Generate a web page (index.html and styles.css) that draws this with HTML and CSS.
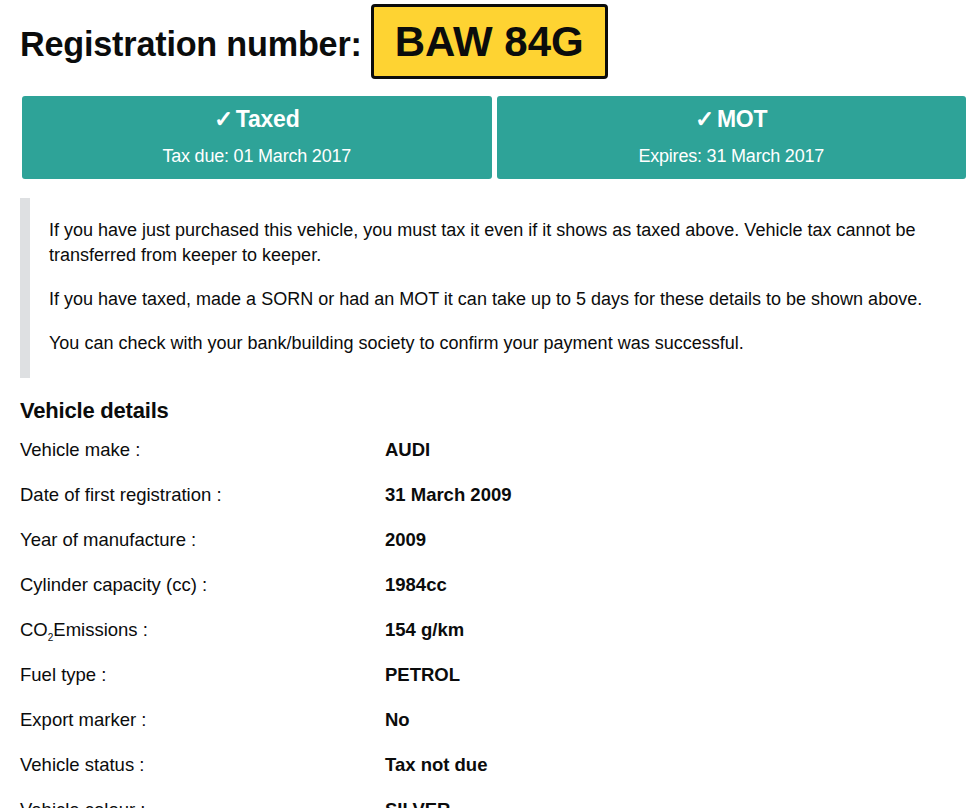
FILE: index.html
```html
<!DOCTYPE html>
<html lang="en">
<head>
  <meta charset="UTF-8" />
  <meta name="viewport" content="width=device-width, initial-scale=1.0"/>
  <title>Vehicle enquiry</title>
  <link rel="stylesheet" href="styles.css">
</head>
<body>
  <main class="page">
    <!-- Reg heading + plate -->
    <div class="reg-heading">
      <h1 class="reg-title">Registration number:</h1>
      <div class="reg-plate">BAW 84G</div>
    </div>

    <!-- Tax / MOT status -->
    <div class="status-row">
      <div class="status-box">
        <h2 class="status-title"><span class="tick">&#10003;</span>Taxed</h2>
        <p class="status-sub">Tax due: 01 March 2017</p>
      </div>
      <div class="status-box">
        <h2 class="status-title"><span class="tick">&#10003;</span>MOT</h2>
        <p class="status-sub">Expires: 31 March 2017</p>
      </div>
    </div>

    <div class="inset-text">
      <p>If you have just purchased this vehicle, you must tax it even if it shows as taxed above. Vehicle tax cannot be transferred from keeper to keeper.</p>
      <p>If you have taxed, made a SORN or had an MOT it can take up to 5 days for these details to be shown above.</p>
      <p>You can check with your bank/building society to confirm your payment was successful.</p>
    </div>

    <h2 class="section-title">Vehicle details</h2>
    <ul class="details-list">
      <li><span class="label">Vehicle make :</span><strong class="value">AUDI</strong></li>
      <li><span class="label">Date of first registration :</span><strong class="value">31 March 2009</strong></li>
      <li><span class="label">Year of manufacture :</span><strong class="value">2009</strong></li>
      <li><span class="label">Cylinder capacity (cc) :</span><strong class="value">1984cc</strong></li>
      <li><span class="label">CO<sub>2</sub>Emissions :</span><strong class="value">154 g/km</strong></li>
      <li><span class="label">Fuel type :</span><strong class="value">PETROL</strong></li>
      <li><span class="label">Export marker :</span><strong class="value">No</strong></li>
      <li><span class="label">Vehicle status :</span><strong class="value">Tax not due</strong></li>
      <li><span class="label">Vehicle colour :</span><strong class="value">SILVER</strong></li>
    </ul>
  </main>
</body>
</html>
```

FILE: styles.css
```css
body {
  margin: 0;
  padding: 0;
  font-family: "Liberation Sans", Arial, sans-serif;
  color: #0b0c0c;
  background: #fff;
}
.page {
  padding: 4px 8px 0 20px;
}
.reg-heading {
  display: flex;
  align-items: baseline;
  gap: 9px;
}
.reg-title {
  margin: 0;
  font-size: 34.2px;
  font-weight: bold;
  letter-spacing: -0.2px;
}
.reg-plate {
  background: #fed332;
  border: 3px solid #0b0c0c;
  border-radius: 4px;
  height: 69px;
  line-height: 69px;
  padding: 0 21px;
  font-size: 42px;
  font-weight: bold;
}
.status-row {
  display: grid;
  grid-template-columns: 1fr 1fr;
  gap: 5px;
  margin: 17px 0 0 2px;
}
.status-box {
  background: #2ea398;
  color: #fff;
  border-radius: 3px;
  height: 83px;
  text-align: center;
  box-sizing: border-box;
  padding-top: 9px;
}
.status-title {
  margin: 0;
  font-size: 23px;
  line-height: 28px;
  letter-spacing: -0.2px;
}
.status-title .tick {
  margin-right: 3px;
}
.status-sub {
  margin: 11px 0 0;
  font-size: 18px;
  line-height: 24px;
  letter-spacing: -0.2px;
}
.inset-text {
  margin-top: 19px;
  border-left: 10px solid #dee0e2;
  padding: 20px 0 22px 19px;
  font-size: 18px;
  line-height: 25px;
  letter-spacing: 0;
}
.inset-text p {
  margin: 0 0 19px;
}
.inset-text p:last-child {
  margin-bottom: 0;
}
.section-title {
  margin: 19px 0 0;
  font-size: 22px;
  line-height: 28px;
  letter-spacing: -0.2px;
}
.details-list {
  list-style: none;
  margin: 12px 0 0;
  padding: 0;
  font-size: 18.5px;
}
.details-list li {
  display: flex;
  height: 45px;
  line-height: 25px;
}
.details-list .label {
  width: 365px;
}
.details-list sub {
  font-size: 10px;
  line-height: 0;
}
```
